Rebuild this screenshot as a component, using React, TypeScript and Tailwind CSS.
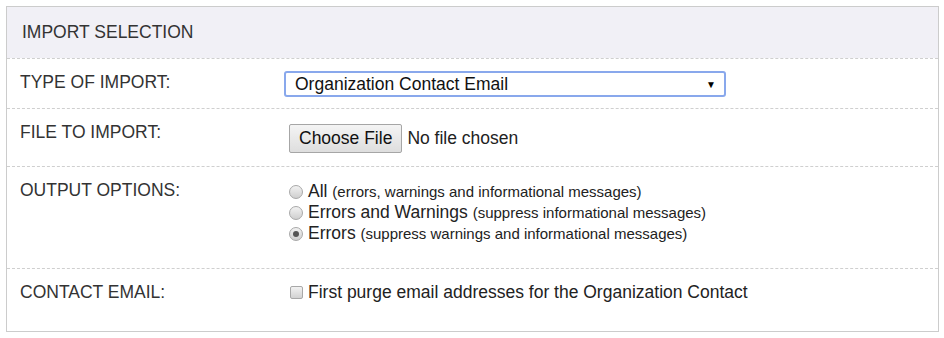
import React from 'react';

const font = { fontFamily: '"Liberation Sans", Arial, sans-serif' };

function Radio({ checked }: { checked?: boolean }) {
  return (
    <span className="inline-flex h-[14px] w-[14px] shrink-0 items-center justify-center rounded-full border border-[#a8a8a8] bg-gradient-to-b from-[#f2f2f2] to-[#cfcfcf]">
      {checked && <span className="h-[6px] w-[6px] rounded-full bg-[#555]" />}
    </span>
  );
}

function Row({ label, children, cls }: { label: string; children: React.ReactNode; cls: string }) {
  return (
    <div className={`flex border-t border-dashed border-[#cfcfcf] ${cls}`}>
      <div className="w-[277px] shrink-0 pl-[13px] pt-[13px] text-[17.5px] leading-[20px] text-[#333]">{label}</div>
      <div className="flex-1">{children}</div>
    </div>
  );
}

export default function App() {
  return (
    <div className="min-h-[338px] w-[944px] bg-white pl-[6px] pt-[6px]" style={font}>
      <div className="w-[933px] border border-[#cccccc]">
        <div className="h-[51px] bg-[#f1f0f6] pl-[15px] pt-[15px] text-[17.5px] leading-[20px] text-[#333]">
          IMPORT SELECTION
        </div>

        <Row label="TYPE OF IMPORT:" cls="h-[50px]">
          <div className="pt-[12px]">
            <div className="flex h-[26px] w-[442px] items-center justify-between rounded-[3px] border-2 border-[#89a8ec] bg-white pl-[9px] pr-[8px] text-[17.5px] text-[#111]">
              <span>Organization Contact Email</span>
              <span className="text-[10px] text-black">▼</span>
            </div>
          </div>
        </Row>

        <Row label="FILE TO IMPORT:" cls="h-[58px]">
          <div className="flex items-center pl-[5px] pt-[15px]">
            <span className="flex h-[29px] items-center rounded-[2px] border border-[#a6a6a6] bg-gradient-to-b from-[#f4f4f4] to-[#dedede] px-[9px] text-[17.5px] text-[#111]">
              Choose File
            </span>
            <span className="pl-[5px] text-[17.5px] text-[#222]">No file chosen</span>
          </div>
        </Row>

        <Row label="OUTPUT OPTIONS:" cls="h-[102px]">
          <div className="flex flex-col pl-[5px] pt-[14px] text-[#222]">
            <div className="flex h-[21px] items-center gap-[5px]">
              <Radio />
              <span className="text-[17.5px]">
                All <span className="text-[15px]">(errors, warnings and informational messages)</span>
              </span>
            </div>
            <div className="flex h-[21px] items-center gap-[5px]">
              <Radio />
              <span className="text-[17.5px]">
                Errors and Warnings <span className="text-[15px]">(suppress informational messages)</span>
              </span>
            </div>
            <div className="flex h-[21px] items-center gap-[5px]">
              <Radio checked />
              <span className="text-[17.5px]">
                Errors <span className="text-[15px]">(suppress warnings and informational messages)</span>
              </span>
            </div>
          </div>
        </Row>

        <Row label="CONTACT EMAIL:" cls="h-[63px]">
          <div className="flex items-center gap-[5px] pl-[6px] pt-[13px] text-[17.5px] leading-[20px] text-[#222]">
            <span className="h-[13px] w-[13px] shrink-0 rounded-[2px] border border-[#a8a8a8] bg-gradient-to-b from-[#f2f2f2] to-[#d2d2d2]" />
            <span>First purge email addresses for the Organization Contact</span>
          </div>
        </Row>
      </div>
    </div>
  );
}
